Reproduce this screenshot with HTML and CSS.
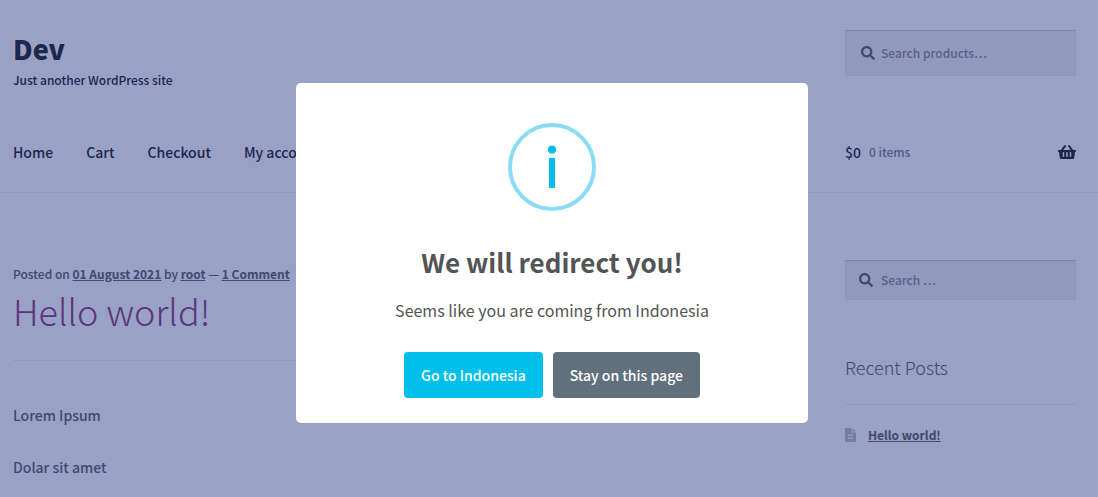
FILE: index.html
```html
<!DOCTYPE html>
<html lang="en">
<head>
<meta charset="utf-8">
<title>Dev</title>
<link rel="stylesheet" href="styles.css">
</head>
<body>
<header class="site-header">
  <div class="wrap masthead">
    <div class="branding">
      <h1 class="site-title"><a href="#">Dev</a></h1>
      <p class="tagline">Just another WordPress site</p>
    </div>
    <form class="side search search-products">
      <svg class="search-icon" viewBox="0 0 512 512" aria-hidden="true"><path d="M505 442.700L405.300 343c-4.500-4.500-10.600-7-17-7H372c27.600-35.300 44-79.700 44-128C416 93.100 322.900 0 208 0S0 93.100 0 208s93.100 208 208 208c48.300 0 92.700-16.400 128-44v16.300c0 6.400 2.500 12.500 7 17l99.700 99.700c9.400 9.400 24.600 9.400 33.900 0l28.300-28.300c9.400-9.400 9.400-24.600.1-34zM208 336c-70.700 0-128-57.200-128-128 0-70.700 57.200-128 128-128 70.700 0 128 57.200 128 128 0 70.700-57.200 128-128 128z"/></svg>
      <input type="search" aria-label="Search products" placeholder="Search products…">
    </form>
  </div>
  <div class="wrap navbar">
    <nav class="menu">
      <a href="#">Home</a><a href="#">Cart</a><a href="#">Checkout</a><a href="#">My account</a>
    </nav>
    <a class="side cart" href="#">
      <span class="amount">$0</span><span class="count">0 items</span>
      <svg class="basket" viewBox="0 0 576 512" role="img" aria-label="Cart"><path d="M576 216v16c0 13.300-10.700 24-24 24h-8l-26.100 182.800C514.500 462.400 494.300 480 470.400 480H105.600c-23.900 0-44.100-17.600-47.500-41.200L32 256h-8c-13.300 0-24-10.700-24-24v-16c0-13.300 10.700-24 24-24h67.300l106.800-146.800c10.400-14.300 30.400-17.500 44.700-7.100 14.300 10.400 17.500 30.400 7.100 44.700L170.500 192h235L326.100 82.800c-10.400-14.300-7.200-34.300 7.100-44.700 14.300-10.400 34.300-7.200 44.700 7.100L484.700 192H552c13.300 0 24 10.700 24 24zM312 392V280c0-13.300-10.700-24-24-24s-24 10.700-24 24v112c0 13.300 10.700 24 24 24s24-10.700 24-24zm112 0V280c0-13.300-10.700-24-24-24s-24 10.700-24 24v112c0 13.300 10.700 24 24 24s24-10.700 24-24zm-224 0V280c0-13.300-10.700-24-24-24s-24 10.700-24 24v112c0 13.300 10.700 24 24 24s24-10.700 24-24z"/></svg>
    </a>
  </div>
</header>
<div class="wrap content">
  <main class="post">
    <p class="meta">Posted on <a href="#">01 August 2021</a> by <a href="#">root</a> — <a href="#">1 Comment</a></p>
    <h2 class="post-title"><a href="#">Hello world!</a></h2>
    <div class="body">
      <p>Lorem Ipsum</p>
      <p>Dolar sit amet</p>
    </div>
  </main>
  <aside class="side">
    <form class="search search-site">
      <svg class="search-icon" viewBox="0 0 512 512" aria-hidden="true"><path d="M505 442.700L405.300 343c-4.500-4.500-10.600-7-17-7H372c27.600-35.300 44-79.700 44-128C416 93.100 322.900 0 208 0S0 93.100 0 208s93.100 208 208 208c48.300 0 92.700-16.400 128-44v16.300c0 6.400 2.500 12.500 7 17l99.700 99.700c9.400 9.400 24.600 9.400 33.900 0l28.300-28.300c9.400-9.400 9.400-24.600.1-34zM208 336c-70.700 0-128-57.200-128-128 0-70.700 57.200-128 128-128 70.700 0 128 57.200 128 128 0 70.700-57.200 128-128 128z"/></svg>
      <input type="search" aria-label="Search" placeholder="Search …">
    </form>
    <h3 class="widget-title">Recent Posts</h3>
    <ul class="recent">
      <li>
        <svg class="file-icon" viewBox="0 0 11 14" aria-hidden="true"><path fill-rule="evenodd" d="M.7 0H6.500v3.800q0 .7.700.7H11v8.800q0 .7-.7.7H.7q-.7 0-.7-.7V.7Q0 0 .7 0zM3 6.500h5v1.200H3zM3 9.500h5v1.200H3z"/><path d="M7.500 0 11 3.500H7.500z"/></svg>
        <a href="#">Hello world!</a>
      </li>
    </ul>
  </aside>
</div>
<div class="backdrop">
  <div class="modal" role="dialog" aria-modal="true" aria-labelledby="modal-title">
    <svg class="info" viewBox="0 0 88 88" aria-hidden="true"><circle cx="44" cy="44" r="42" fill="none" stroke="#8adcf3" stroke-width="4"/><circle cx="44" cy="26.500" r="4" fill="#00bfea"/><path d="M41 35h6v30h-6z" fill="#00bfea"/></svg>
    <h2 class="modal-title" id="modal-title">We will redirect you!</h2>
    <p class="modal-text">Seems like you are coming from Indonesia</p>
    <div class="actions">
      <button class="btn btn-go" type="button">Go to Indonesia</button>
      <button class="btn btn-stay" type="button">Stay on this page</button>
    </div>
  </div>
</div>
</body>
</html>
```
FILE: styles.css
```css
* { box-sizing: border-box; }
html { height: 100%; overflow: hidden; }
body {
  margin: 0;
  background: #fff;
  color: #6d6d6d;
  font: 500 14px/26px "Noto Sans CJK SC", "Noto Sans CJK JP", sans-serif;
}
h1, h2, h3, p, ul { margin: 0; padding: 0; }
ul { list-style: none; }
a { color: inherit; }
.wrap { display: flex; justify-content: space-between; padding: 0 22px 0 13px; }
.side { width: 231px; flex: none; }

.site-header { border-bottom: 1px solid #f0f0f0; color: #333; }
.site-header a { text-decoration: none; }
.masthead { padding-top: 30px; align-items: flex-start; }
.site-title { font-size: 27px; line-height: 38px; font-weight: 900; }
.tagline { font-size: 12px; line-height: 24px; }
.navbar { padding-top: 46px; padding-bottom: 26px; align-items: center; }
.menu { display: flex; gap: 33px; line-height: 28px; }
.cart { display: flex; align-items: center; gap: 8px; line-height: 28px; }
.count { font-size: 12px; color: #8a8a8a; }
.basket { width: 18px; height: 16px; margin-left: auto; fill: #333; }

.search { display: flex; align-items: center; gap: 6px; background: #f2f2f2; box-shadow: inset 0 1px 1px rgba(0, 0, 0, 0.125), inset 0 0 1px rgba(0, 0, 0, 0.2); }
.search-products { height: 46px; padding: 0 16px; }
.search-site { height: 40px; padding: 0 14px; gap: 8px; }
.search-icon { width: 14px; height: 14px; flex: none; fill: #6d6d6d; }
.search input { flex: 1; min-width: 0; padding: 0; border: 0; outline: 0; background: none; font: inherit; font-size: 12px; color: #43454b; }
.search input::placeholder { color: #959595; opacity: 1; }

.content { padding-top: 67px; }
.post { width: 744px; }
.meta { font-size: 12px; line-height: 28px; }
.meta a, .recent a { font-weight: 700; }
.post-title { padding-bottom: 28px; border-bottom: 1px solid #f0f0f0; font-size: 36px; line-height: 44px; font-weight: 300; color: #964d80; }
.post-title a { text-decoration: none; }
.body { display: grid; gap: 26px; padding-top: 41px; }
.widget-title { margin-top: 53px; padding-bottom: 23px; border-bottom: 1px solid #f0f0f0; font-size: 18px; line-height: 28px; font-weight: 300; }
.recent { padding-top: 17px; }
.recent li { display: flex; align-items: center; gap: 12px; font-size: 12px; }
.file-icon { width: 11px; height: 14px; fill: #c4c4c4; }

.backdrop { position: fixed; inset: 0; display: flex; align-items: center; justify-content: center; padding: 9px 0 0 6px; background: rgba(2, 20, 113, 0.4); }
.modal { display: flex; flex-direction: column; align-items: center; width: 512px; max-width: 100%; padding: 40px 20px 25px; border-radius: 5px; background: #fff; text-align: center; }
.info { width: 88px; height: 88px; }
.modal-title { margin-top: 32px; font-size: 26px; line-height: 38px; font-weight: 700; color: #545454; }
.modal-text { margin-top: 15px; font-size: 16px; line-height: 28px; font-weight: 400; color: #545454; }
.actions { display: flex; gap: 10px; margin-top: 28px; }
.btn { padding: 10px 17px; border: 0; border-radius: 4px; color: #fff; font: 500 14px/26px "Noto Sans CJK SC", "Noto Sans CJK JP", sans-serif; }
.btn-go { background: #00bfea; }
.btn-stay { background: #60717b; }
```
